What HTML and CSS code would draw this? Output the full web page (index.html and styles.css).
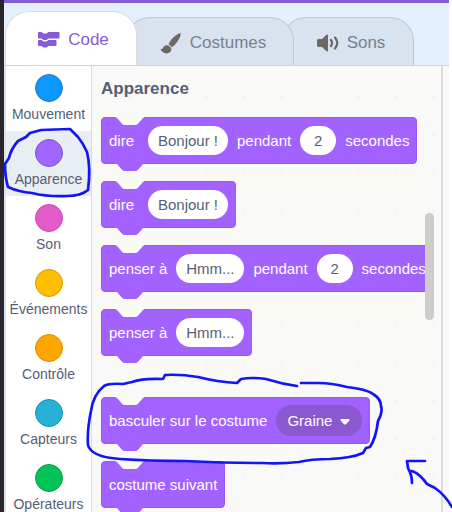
FILE: index.html
```html
<!DOCTYPE html>
<html lang="fr">
<head>
<meta charset="utf-8">
<title>Scratch</title>
<link rel="stylesheet" href="styles.css">
</head>
<body>
<div class="app">
  <header class="tabs" role="tablist">
    <button class="tab tab-active" role="tab" aria-selected="true">
      <svg width="22" height="16" viewBox="0 0 22 16" fill="#855cd6"><path d="M1 0h2.500l2 1.500h3L10.500 0H20.500q1 0 1 1v4.500q0 1-1 1H10.500L8.500 8h-3l-2-1.500H1q-1 0-1-1V1q0-1 1-1z"/><path d="M1 8h2.500l2 1.500h3L10.500 8H17.500q1 0 1 1v4q0 1-1 1H10.500L8.500 15.500h-3l-2-1.500H1q-1 0-1-1V9q0-1 1-1z"/></svg>
      Code
    </button>
    <button class="tab tab-costumes" role="tab" aria-selected="false">
      <svg width="22" height="22" viewBox="0 0 22 22" fill="#6b6961"><path d="M20.500 1C17 1.500 9.500 8 8.500 12.500q2 .5 3.500 2.800C16 12.500 21.500 5 20.500 1z"/><path d="M7.200 13.300c-2.400-.2-3.700 1.300-4.200 2.700-.5 1-1.500 1.200-2.500.8.8 3 3.500 4.700 6.500 4.600 3-.2 4.500-2 4.300-4.300-.1-2-1.800-3.500-4.100-3.800z"/></svg>
      Costumes
    </button>
    <button class="tab tab-sounds" role="tab" aria-selected="false">
      <svg width="22" height="18" viewBox="0 0 22 18"><path d="M1.500 5h3.500L9.500.8Q11 0 11 1.500v15q0 1.500-1.500.7L5 13H1.500Q0 13 0 11.500v-5Q0 5 1.500 5z" fill="#6b6961"/><path d="M14 6q2.200 3 0 6M18 3.500q4.500 5.500 0 11" fill="none" stroke="#6b6961" stroke-width="2.200" stroke-linecap="round"/></svg>
      Sons
    </button>
  </header>
  <main class="editor">
    <nav class="categories">
      <button class="category motion"><span class="dot"></span>Mouvement</button>
      <button class="category looks selected"><span class="dot"></span>Apparence</button>
      <button class="category sound"><span class="dot"></span>Son</button>
      <button class="category events"><span class="dot"></span>Événements</button>
      <button class="category control"><span class="dot"></span>Contrôle</button>
      <button class="category sensing"><span class="dot"></span>Capteurs</button>
      <button class="category operators"><span class="dot"></span>Opérateurs</button>
    </nav>
    <section class="palette">
      <div class="blocks">
        <h2>Apparence</h2>
        <div class="block"><label class="first" for="say1">dire</label><input id="say1" class="field say" value="Bonjour !"><label for="sec1">pendant</label><input id="sec1" class="field num" value="2"><span>secondes</span></div>
        <div class="block"><label class="first" for="say2">dire</label><input id="say2" class="field say" value="Bonjour !"></div>
        <div class="block"><label for="think1">penser à</label><input id="think1" class="field think" value="Hmm..."><label for="sec2">pendant</label><input id="sec2" class="field num" value="2"><span>secondes</span></div>
        <div class="block"><label for="think2">penser à</label><input id="think2" class="field think" value="Hmm..."></div>
        <div class="block group-start"><label for="costume">basculer sur le costume</label><span class="picker"><select id="costume"><option>Graine</option></select><svg class="caret" width="10" height="6" viewBox="0 0 10 6"><path d="M1.500 0h7q1.500.3.900 1.500L6 5.200q-1 .8-2 0L.6 1.500Q0 .3 1.500 0z" fill="#fff"/></svg></span></div>
        <div class="block">costume suivant</div>
      </div>
      <div class="scroll"><div class="thumb"></div></div>
    </section>
    <div class="workspace"></div>
  </main>
</div>
<svg class="ink" width="452" height="512" viewBox="0 0 452 512" fill="none" stroke="#1414f5" stroke-width="2.700" stroke-linecap="round" stroke-linejoin="round">
  <path d="M70 129 41 130 30 133 26 137 18 141Q11 149 9 158L5 164Q5 177 8 187Q19 192 32 193Q48 197 67 196Q81 196 88 190Q91 168 87 152Q83 143 78 137Z"/>
  <path d="M297 386Q282 384 266 379Q252 377 241 379L237 383Q218 382 198 377Q180 374 165 375L163 379Q143 378 132 382L123 384Q109 383 104 386Q93 395 91 411Q87 430 88 445Q91 457 120 459Q150 461 185 461Q225 463 262 463Q280 464 299 462Q311 459 330 459Q352 458 363 453L366 448 370 447Q376 438 378 421Q383 412 381 406Q381 399 373 394Q366 389 347 387Q331 383 319 383H301"/>
  <path d="M425 461H407L408 468Q412 475 412 483M412 471Q420 474 427 484L435 488Q445 495 452 507"/>
</svg>
</body>
</html>
```
FILE: styles.css
```css
* { box-sizing: border-box; }
body {
  margin: 0;
  height: 100vh;
  overflow: hidden;
  position: relative;
  background: #fff;
  font-family: "Liberation Sans", Arial, sans-serif;
  color: #575e75;
}
button, input, select { font: inherit; color: inherit; border: 0; margin: 0; padding: 0; }
.app {
  display: flex;
  flex-direction: column;
  height: 100vh;
  margin-right: 3px;
  border-left: 4px solid #2b262d;
  background: #e5f0ff;
}
.tabs {
  display: flex;
  align-items: flex-end;
  flex: none;
  height: 66px;
  padding-left: 1px;
  border-top: 3px solid #855cd6;
  border-bottom: 1px solid #d0d4da;
}
.tab {
  display: flex;
  align-items: center;
  justify-content: center;
  gap: 8px;
  height: 48px;
  padding-top: 3px;
  border: 1px solid #bcc8d2;
  border-bottom: 0;
  border-radius: 24px 24px 0 0;
  background: #d9e3f0;
  color: #78808f;
  font-size: 17px;
  position: relative;
}
.tab svg { flex: none; }
.tab-active {
  z-index: 3;
  width: 132px;
  height: 54px;
  padding-left: 5px;
  border-color: #dcdcdc;
  background: #fff;
  color: #855cd6;
}
.tab-costumes { z-index: 2; width: 168px; margin-left: -11px; padding-left: 6px; }
.tab-sounds { width: 132px; margin-left: -12px; padding-left: 6px; }
.editor { display: flex; flex: 1; min-height: 0; }
.categories {
  flex: none;
  width: 88px;
  overflow: hidden;
  border-left: 2px solid #dde3ec;
  border-right: 1px solid #dcdcdc;
  background: #fff;
}
.category {
  display: flex;
  flex-direction: column;
  align-items: center;
  width: 100%;
  height: 65px;
  padding-top: 8px;
  gap: 4px;
  background: none;
  font-size: 14px;
  line-height: 16px;
  white-space: nowrap;
}
.selected { background: #e9eef2; }
.dot { flex: none; width: 28px; height: 28px; border: 1px solid; border-radius: 50%; }
.motion .dot { background: #0d98ff; border-color: #3373cc; }
.looks .dot { background: #a064ff; border-color: #8052cc; }
.sound .dot { background: #e35bcb; border-color: #d642b6; }
.events .dot { background: #ffbf00; border-color: #dd9a00; }
.control .dot { background: #ffa500; border-color: #e48a0a; }
.sensing .dot { background: #26b1d5; border-color: #0d93ba; }
.operators .dot { background: #00c45a; border-color: #0b9a46; }
.palette {
  display: flex;
  flex: 1;
  min-width: 0;
  padding-right: 7px;
  border-right: 2px solid #dcdcdc;
  background: #f9f9f8 radial-gradient(circle, #f2f2f2 1px, transparent 2px) -19px 12px / 38px 38px;
}
.blocks {
  display: flex;
  flex-direction: column;
  align-items: flex-start;
  flex: 1;
  min-width: 0;
  gap: 17px;
  overflow: hidden;
  padding: 12px 0 0 9px;
}
h2 { margin: 0; font-size: 17px; line-height: 22px; }
.block {
  display: flex;
  align-items: center;
  flex: none;
  gap: 9px;
  position: relative;
  height: 47px;
  padding: 0 7px;
  border: 1px solid #965ced;
  border-radius: 4px;
  background: #a262ff;
  color: #fff;
  font-size: 15px;
  white-space: nowrap;
}
.block::before, .block::after {
  content: "";
  position: absolute;
  left: 13px;
  width: 30px;
  height: 8px;
  clip-path: polygon(0 0, 100% 0, 94% 10%, 76% 88%, 70% 100%, 30% 100%, 24% 88%, 6% 10%);
}
.block::before { top: -1px; background: #f9f9f8; }
.block::after { top: 100%; background: #a262ff; }
.group-start { margin-top: 24px; }
.first { width: 30px; }
.field {
  height: 29px;
  border-radius: 15px;
  background: #fff;
  color: #575e75;
  text-align: center;
}
.say { width: 80px; }
.think { width: 68px; }
.num { width: 36px; }
.picker { position: relative; display: flex; }
.picker select {
  width: 86px;
  height: 31px;
  padding-left: 11px;
  appearance: none;
  border-radius: 16px;
  background: #8a58cf;
  color: #fff;
}
.caret { position: absolute; right: 12px; top: 14px; }
.scroll { flex: none; width: 9px; padding-top: 147px; }
.thumb { height: 107px; border-radius: 5px; background: #d0cdc8; }
.workspace { flex: none; width: 6px; background: #f9f9f9; }
.ink { position: absolute; left: 0; top: 0; pointer-events: none; }
```
